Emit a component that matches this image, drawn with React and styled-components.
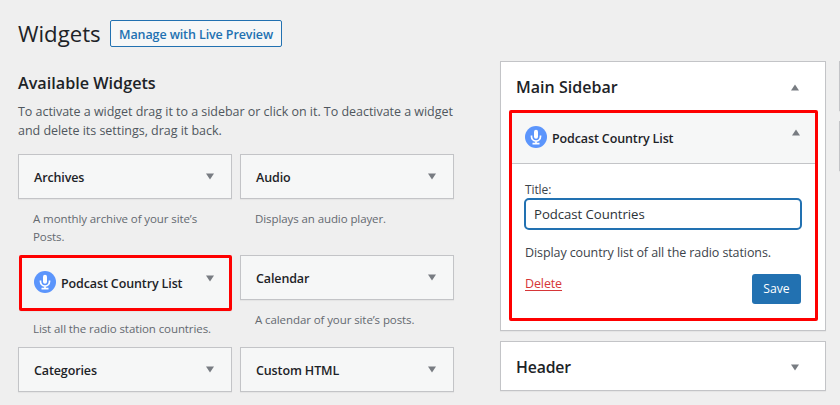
import React from "react";
import styled, { createGlobalStyle } from "styled-components";

const GlobalStyle = createGlobalStyle`
  * { box-sizing: border-box; }
  body {
    margin: 0;
    background: #efefef;
    color: #3c434a;
    font: 400 12.5px/19px "Open Sans", "Noto Sans", sans-serif;
    overflow: hidden;
  }
  h1, h2, h3, p { margin: 0; }
`;

const Page = styled.div`
  width: 840px;
  height: 405px;
  display: flex;
  align-items: flex-start;
  overflow: hidden;
  background: #efefef;
`;

const Main = styled.main`
  width: 436px;
  margin-left: 18px;
  padding-top: 20px;
  flex: none;
`;

const TitleRow = styled.div`
  display: flex;
  gap: 9px;
  height: 27px;
`;

const PageTitle = styled.h1`
  width: 83px;
  font-size: 22.2px;
  font-weight: 400;
  line-height: 27px;
  color: #1d2327;
  white-space: nowrap;
`;

const PreviewButton = styled.button`
  width: 172px;
  height: 27px;
  padding: 0;
  border: 1px solid #2271b1;
  border-radius: 2px;
  background: #f6f7f7;
  color: #2271b1;
  font: 570 12.5px/27px "Open Sans", sans-serif;
  letter-spacing: -0.1px;
  white-space: nowrap;
`;

const SectionTitle = styled.h2`
  margin-top: 25px;
  font-size: 16.2px;
  font-weight: 580;
  line-height: 22px;
  letter-spacing: 0;
  color: #1d2327;
`;

const Intro = styled.p`
  margin-top: 8px;
  color: #50575e;
  white-space: nowrap;
  letter-spacing: -0.03px;
`;

const WidgetGrid = styled.div`
  display: grid;
  grid-template-columns: 214px 214px;
  grid-template-rows: 101px 92px 45px;
  column-gap: 8px;
  margin-top: 14px;
`;

const WidgetBox = styled.div`
  height: ${(p) => (p.$marked ? 56 : 45)}px;
  display: flex;
  align-items: ${(p) => (p.$marked ? "flex-start" : "center")};
  padding: ${(p) => (p.$marked ? "13px 15px 0 12px" : "0 17px 0 15px")};
  border: ${(p) => (p.$marked ? "3px solid #fe0000" : "1px solid #c3c4c7")};
  border-radius: ${(p) => (p.$marked ? 2 : 0)}px;
  margin-left: ${(p) => (p.$marked ? 1 : 0)}px;
  background: #f6f7f7;
  box-shadow: 0 1px 1px rgba(0, 0, 0, 0.04);
`;

const WidgetName = styled.h3`
  flex: 1;
  padding-top: 1px;
  font-size: 12.5px;
  font-weight: 570;
  line-height: 19px;
  letter-spacing: -0.12px;
  color: #1d2327;
  white-space: nowrap;
`;

const MarkedName = styled(WidgetName)`
  margin: 2px 0 0 5px;
`;

const WidgetNote = styled.p`
  padding: ${(p) => (p.$marked ? 9 : 11)}px 14px 0 15px;
  color: #646970;
  font-size: 11.5px;
  line-height: 18px;
  letter-spacing: -0.09px;
`;

const Arrow = styled.svg`
  display: block;
  flex: none;
  width: 8px;
  height: 7px;
  margin-top: ${(p) => p.$top || 0}px;
  fill: #787c82;
`;

const Badge = styled.svg`
  display: block;
  flex: none;
  width: 22px;
  height: 22px;
`;

const Areas = styled.section`
  width: 326px;
  margin: 61px 0 0 46px;
  flex: none;
  display: flex;
  flex-direction: column;
  gap: 10px;
`;

const Area = styled.div`
  height: ${(p) => (p.$open ? 270 : 50)}px;
  border: 1px solid #c3c4c7;
  background: #fff;
  box-shadow: 0 1px 1px rgba(0, 0, 0, 0.04);
`;

const AreaHead = styled.div`
  height: 48px;
  display: flex;
  align-items: center;
  justify-content: space-between;
  padding: 2px 26px 0 15px;
`;

const AreaTitle = styled.h2`
  font-size: ${(p) => (p.$small ? 15.8 : 16)}px;
  font-weight: 580;
  line-height: 24px;
  letter-spacing: ${(p) => (p.$small ? -0.15 : 0.02)}px;
  color: #1d2327;
`;

const OpenWidget = styled.div`
  width: 309px;
  height: 211px;
  margin-left: 8px;
  border: 3px solid #fe0000;
  border-radius: 2px;
`;

const OpenHead = styled.div`
  height: 51px;
  display: flex;
  align-items: flex-start;
  padding: 13px 15px 0 13px;
  border-bottom: 1px solid #c3c4c7;
  background: #f6f7f7;
`;

const Form = styled.div`
  padding: 18px 13px 0 12px;
`;

const Label = styled.label`
  display: block;
  padding-left: 1px;
  font-size: 12px;
  line-height: 16px;
  letter-spacing: -0.1px;
`;

const Field = styled.input`
  display: block;
  width: 278px;
  height: 32px;
  padding: 0 8px;
  border: 2px solid #2271b1;
  border-radius: 5px;
  outline: none;
  background: #fff;
  color: #2c3338;
  font: 400 13.2px/28px "Open Sans", sans-serif;
  letter-spacing: -0.05px;
`;

const Help = styled.p`
  margin: 13px 0 0 1px;
  letter-spacing: -0.09px;
  white-space: nowrap;
`;

const Actions = styled.div`
  display: flex;
  justify-content: space-between;
  margin: 12px 1px 0;
`;

const DeleteLink = styled.a`
  height: 19px;
  color: #d63638;
  letter-spacing: -0.12px;
  text-decoration: underline;
  text-underline-offset: 2px;
`;

const SaveButton = styled.button`
  width: 49px;
  height: 30px;
  padding: 0;
  border: 0;
  border-radius: 3px;
  background: #2271b1;
  color: #fff;
  font: 400 12.2px/30px "Open Sans", sans-serif;
`;

const NextColumn = styled.div`
  flex: none;
  width: 20px;
  margin: 61px 0 0 13px;
  display: grid;
  gap: 10px;
`;

const WidgetIcon = () => (
  <Badge viewBox="0 0 22 22">
    <circle cx="11" cy="11" r="11" fill="#5b95fc" />
    <rect x="9" y="3.8" width="4" height="9" rx="2" fill="#fff" />
    <path
      d="M6.5 9.6v.9a4.5 4.5 0 0 0 9 0v-.9M11 15v2.6M7.5 17.6h7"
      fill="none"
      stroke="#fff"
      strokeWidth="1.7"
    />
  </Badge>
);

const Toggle = ({ up, top }) => (
  <Arrow viewBox="0 0 8 7" $top={top}>
    <path d={up ? "M0 6.5h8L4 .5z" : "M0 .5h8L4 6.5z"} />
  </Arrow>
);

const Widget = ({ name, note, marked }) => (
  <div>
    <WidgetBox $marked={marked}>
      {marked ? (
        <>
          <WidgetIcon />
          <MarkedName>{name}</MarkedName>
          <Toggle top={4} />
        </>
      ) : (
        <>
          <WidgetName>{name}</WidgetName>
          <Toggle />
        </>
      )}
    </WidgetBox>
    {note && <WidgetNote $marked={marked}>{note}</WidgetNote>}
  </div>
);

export default function App() {
  return (
    <>
      <GlobalStyle />
      <Page>
        <Main>
          <TitleRow>
            <PageTitle>Widgets</PageTitle>
            <PreviewButton>Manage with Live Preview</PreviewButton>
          </TitleRow>
          <SectionTitle>Available Widgets</SectionTitle>
          <Intro>
            To activate a widget drag it to a sidebar or click on it. To deactivate a widget
            <br />
            and delete its settings, drag it back.
          </Intro>
          <WidgetGrid>
            <Widget name="Archives" note="A monthly archive of your site’s Posts." />
            <Widget name="Audio" note="Displays an audio player." />
            <Widget name="Podcast Country List" note="List all the radio station countries." marked />
            <Widget name="Calendar" note="A calendar of your site’s posts." />
            <Widget name="Categories" />
            <Widget name="Custom HTML" />
          </WidgetGrid>
        </Main>
        <Areas>
          <Area $open>
            <AreaHead>
              <AreaTitle>Main Sidebar</AreaTitle>
              <Toggle up />
            </AreaHead>
            <OpenWidget>
              <OpenHead>
                <WidgetIcon />
                <MarkedName>Podcast Country List</MarkedName>
                <Toggle up top={3} />
              </OpenHead>
              <Form>
                <Label htmlFor="widget-title">Title:</Label>
                <Field id="widget-title" defaultValue="Podcast Countries" />
                <Help>Display country list of all the radio stations.</Help>
                <Actions>
                  <DeleteLink>Delete</DeleteLink>
                  <SaveButton>Save</SaveButton>
                </Actions>
              </Form>
            </OpenWidget>
          </Area>
          <Area>
            <AreaHead>
              <AreaTitle $small>Header</AreaTitle>
              <Toggle />
            </AreaHead>
          </Area>
        </Areas>
        <NextColumn>
          <Area />
          <Area />
        </NextColumn>
      </Page>
    </>
  );
}
